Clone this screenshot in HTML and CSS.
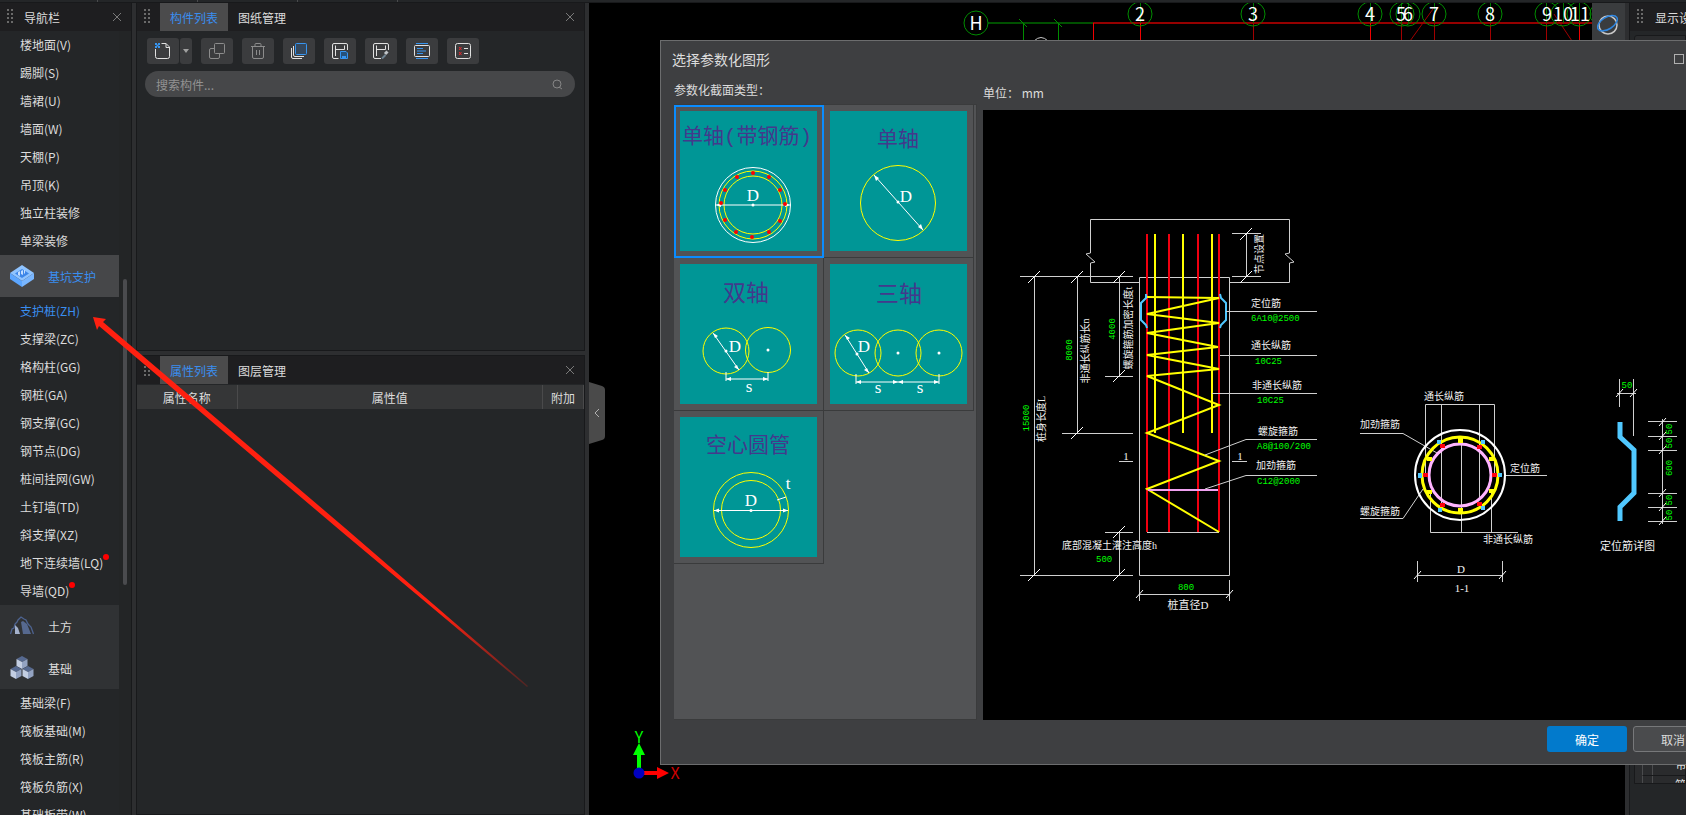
FILE: index.html
```
<!DOCTYPE html>
<html lang="zh-CN">
<head>
    <meta charset="UTF-8">
    <meta name="viewport" content="width=device-width, initial-scale=1.0">
    <title>选择参数化图形</title>
    <link rel="stylesheet" href="styles.css">
</head>
<body>
    <div class="ribbon-edge"></div>
    <div class="workspace">
        <nav class="nav-panel">
            <div class="panel-header">
                <span class="grip"></span>
                <h2>导航栏</h2>
                <button class="close" aria-label="关闭"><svg width="10" height="10" viewBox="0 0 10 10"><path d="M1 1L9 9M9 1L1 9"/></svg></button>
            </div>
            <div class="nav-body">
                <div class="nav-list">
                    <a href="#">楼地面(V)</a>
                    <a href="#">踢脚(S)</a>
                    <a href="#">墙裙(U)</a>
                    <a href="#">墙面(W)</a>
                    <a href="#">天棚(P)</a>
                    <a href="#">吊顶(K)</a>
                    <a href="#">独立柱装修</a>
                    <a href="#">单梁装修</a>
                    <button class="group active">
                        <svg width="24" height="22" viewBox="0 0 24 22">
                            <path fill="#8fc4ff" d="M12 0L24 8L12 16L0 8Z"/>
                            <path fill="#3d86e8" d="M12 4L19 8.500L12 13L5 8.500Z"/>
                            <path fill="#5ca6ff" d="M0 8L12 16V22L0 14Z"/>
                            <path fill="#79b6ff" d="M24 8L12 16V22L24 14Z"/>
                            <path fill="#c3deff" d="M8 7L10 6V11L8 10ZM11 6L13 5V10L11 9ZM14 5L15 5V8L14 9Z"/>
                        </svg>
                        基坑支护
                    </button>
                    <a href="#" class="current">支护桩(ZH)</a>
                    <a href="#">支撑梁(ZC)</a>
                    <a href="#">格构柱(GG)</a>
                    <a href="#">钢桩(GA)</a>
                    <a href="#">钢支撑(GC)</a>
                    <a href="#">钢节点(DG)</a>
                    <a href="#">桩间挂网(GW)</a>
                    <a href="#">土钉墙(TD)</a>
                    <a href="#">斜支撑(XZ)</a>
                    <a href="#"><span class="new">地下连续墙(LQ)</span></a>
                    <a href="#"><span class="new">导墙(QD)</span></a>
                    <button class="group">
                        <svg width="24" height="20" viewBox="0 0 24 20">
                            <path fill="none" stroke="#4d6390" stroke-width="1.3" d="M0.500 18L2 13L4 12L5 8L7 6L8 4L11 1L14 3L16 4L18 8L21 11L23.500 18"/>
                            <path fill="#56698f" d="M11 6L13 5L17 8L21 18H13Z"/>
                            <path fill="#a3b1cc" d="M5 18V9L8 12L10 18Z"/>
                        </svg>
                        土方
                    </button>
                    <button class="group">
                        <svg width="24" height="24" viewBox="0 0 24 24">
                            <g id="cube">
                                <path fill="#56698f" d="M12 0L17.500 3L12 6L6.500 3Z"/>
                                <path fill="#c3cee2" d="M6.500 3L12 6V13L6.500 10Z"/>
                                <path fill="#93a3c2" d="M17.500 3L12 6V13L17.500 10Z"/>
                            </g>
                            <use href="#cube" x="-6" y="10"/>
                            <use href="#cube" x="6" y="10"/>
                        </svg>
                        基础
                    </button>
                    <a href="#">基础梁(F)</a>
                    <a href="#">筏板基础(M)</a>
                    <a href="#">筏板主筋(R)</a>
                    <a href="#">筏板负筋(X)</a>
                    <a href="#">基础板带(W)</a>
                </div>
                <div class="scrollbar"><div class="thumb"></div></div>
            </div>
        </nav>

        <div class="panels">
            <section class="panel components">
                <div class="panel-header">
                    <span class="grip"></span>
                    <button class="tab active">构件列表</button>
                    <button class="tab">图纸管理</button>
                    <button class="close" aria-label="关闭"><svg width="10" height="10" viewBox="0 0 10 10"><path d="M1 1L9 9M9 1L1 9"/></svg></button>
                </div>
                <div class="toolbar">
                    <div class="split">
                        <button aria-label="新建"><svg width="16" height="16" viewBox="0 0 16 16"><path class="w" d="M6.500 0.500H11L14.500 4V13.500Q14.500 15.500 12.500 15.500H2.500Q0.500 15.500 0.500 13.500V6M11 0.500V4.500H15"/><path fill="#3795f0" stroke="none" d="M0 0H2V2H0ZM3 0H5V2H3ZM1.500 1.500H3.500V3.500H1.500ZM0 3H2V5H0ZM3 3H5V5H3Z"/></svg></button>
                        <button class="more" aria-label="更多"><svg width="6" height="4" viewBox="0 0 6 4"><path fill="#a0a0a0" stroke="none" d="M0 0H6L3 4Z"/></svg></button>
                    </div>
                    <button aria-label="复制"><svg width="16" height="16" viewBox="0 0 16 16"><rect class="g" x="5.500" y="0.500" width="10" height="10" rx="1"/><path class="g" d="M5 5.500H2Q0.500 5.500 0.500 7V14Q0.500 15.500 2 15.500H9Q10.500 15.500 10.500 14V11"/></svg></button>
                    <button aria-label="删除"><svg width="16" height="16" viewBox="0 0 16 16"><path class="g" d="M1 3.500H15M5 3V1.500Q5 0.500 6 0.500H10Q11 0.500 11 1.500V3M2.500 4V14Q2.500 15.500 4 15.500H12Q13.500 15.500 13.500 14V4M6.500 7V12M9.500 7V12"/></svg></button>
                    <button aria-label="层间复制"><svg width="16" height="16" viewBox="0 0 16 16"><rect x="4.500" y="0.500" width="11" height="11" rx="1" fill="#34475c" stroke="#3795f0"/><path class="w" d="M2.500 3V12Q2.500 13.500 4 13.500H13M0.500 5V14Q0.500 15.500 2 15.500H11"/></svg></button>
                    <button aria-label="存档"><svg width="16" height="16" viewBox="0 0 16 16"><path class="w" d="M6.500 15.500H2Q0.500 15.500 0.500 14V2Q0.500 0.500 2 0.500H14Q15.500 0.500 15.500 2V7M3.500 2.500V13M3.500 6.500H12.500M12.500 2.500V6.500"/><path fill="#26527c" stroke="#3795f0" d="M8.500 8.500H14L15.500 10V15.500H8.500Z"/><path fill="#3795f0" stroke="none" d="M10 13H14V15H10Z"/></svg></button>
                    <button aria-label="提取"><svg width="16" height="16" viewBox="0 0 16 16"><path class="w" d="M8 15.500H2Q0.500 15.500 0.500 14V2Q0.500 0.500 2 0.500H14Q15.500 0.500 15.500 2V7M3.500 2.500V13M3.500 6.500H12.500M12.500 2.500V6.500"/><path stroke="#c0c4c8" stroke-width="3" d="M12 11L14.500 8.500"/><path stroke="#6e8291" stroke-width="2" d="M9 15.500L12.500 12"/></svg></button>
                    <button aria-label="对齐"><svg width="16" height="16" viewBox="0 0 16 16"><rect class="w" x="0.500" y="2.500" width="15" height="11" rx="1"/><path class="b" d="M2 0.500H14M2 15.500H14M3 5.500H9M3 8H12M3 10.500H9"/></svg></button>
                    <button aria-label="清单"><svg width="16" height="16" viewBox="0 0 16 16"><rect class="w" x="0.500" y="0.500" width="15" height="15" rx="2"/><path class="w" d="M9 5.500H13M9 10.500H13"/><path stroke="#e0282d" d="M4 4L6.500 7M6.500 4L4 7M4 9L6.500 12M6.500 9L4 12"/></svg></button>
                </div>
                <div class="search">
                    <input type="text" placeholder="搜索构件..." aria-label="搜索构件">
                    <svg width="11" height="11" viewBox="0 0 11 11"><circle cx="5" cy="5" r="4"/><path d="M7 8L10 10"/></svg>
                </div>
            </section>
            <section class="panel properties">
                <div class="panel-header">
                    <span class="grip"></span>
                    <button class="tab active">属性列表</button>
                    <button class="tab">图层管理</button>
                    <button class="close" aria-label="关闭"><svg width="10" height="10" viewBox="0 0 10 10"><path d="M1 1L9 9M9 1L1 9"/></svg></button>
                </div>
                <table class="props">
                    <thead>
                        <tr><th class="name">属性名称</th><th>属性值</th><th class="extra">附加</th></tr>
                    </thead>
                </table>
            </section>
        </div>

        <main class="viewport">
            <svg class="model" width="1003" height="812" viewBox="589 3 1003 812">
                <g fill="none" stroke-width="1">
                    <path stroke="#005000" stroke-width="2" d="M988 23H1093"/>
                    <path stroke="#008c00" d="M1023.500 23V41M1058.500 23V41M1019 19L1027 27M1054 19L1062 27"/>
                    <path stroke="#960000" stroke-width="2" d="M1093 23H1592"/>
                    <path stroke="#f00000" d="M1093.500 23V41M1140.500 23V41M1370.500 23V41M1579.500 23V41"/>
                    <path stroke="#a00000" d="M1253.500 23V41M1401.500 23V41M1434.500 23V41M1490.500 23V41M1546.500 23V41M1433 9L1410 41M1554 14L1572 41"/>
                    <path stroke="#007800" d="M1140.500 3V23M1253.500 3V23M1370.500 3V23M1401.500 3V23M1408.500 3V23M1434.500 3V23M1490.500 3V23M1546.500 3V23M1563.500 3V23M1579.500 3V23"/>
                    <path stroke="#c8c8c8" d="M1034 41Q1041 34 1048 41"/>
                    <g stroke="#008c00">
                        <circle cx="976" cy="23" r="12"/>
                        <circle cx="1140" cy="14" r="12"/>
                        <circle cx="1253" cy="14" r="12"/>
                        <circle cx="1370" cy="14" r="12"/>
                        <circle cx="1402" cy="14" r="12"/>
                        <circle cx="1408" cy="14" r="12"/>
                        <circle cx="1434" cy="14" r="12"/>
                        <circle cx="1490" cy="14" r="12"/>
                        <circle cx="1547" cy="14" r="12"/>
                        <circle cx="1563" cy="14" r="12"/>
                        <circle cx="1579" cy="14" r="12"/>
                        <circle cx="1602" cy="14" r="12"/>
                    </g>
                </g>
                <g class="axis-no">
                    <text x="976" y="30">H</text>
                    <text x="1140" y="21">2</text>
                    <text x="1253" y="21">3</text>
                    <text x="1370" y="21">4</text>
                    <text x="1401" y="21">5</text>
                    <text x="1408" y="21">6</text>
                    <text x="1434" y="21">7</text>
                    <text x="1490" y="21">8</text>
                    <text x="1547" y="21">9</text>
                    <text x="1563" y="21">10</text>
                    <text x="1580" y="21">11</text>
                </g>
                <path fill="#00ff00" d="M637 768V755H633L639 743L645 755H641V768Z"/>
                <path fill="#ff0000" d="M644 771H657V767L669 773L657 779V775H644Z"/>
                <circle cx="639" cy="773" r="5.500" fill="#0000c0"/>
                <text class="ucs" x="639" y="743" fill="#00ff00">Y</text>
                <text class="ucs" x="675" y="779" fill="#d00000">X</text>
            </svg>
            <button class="collapse" aria-label="收起"><svg width="16" height="62" viewBox="0 0 16 62"><path fill="#4a4a4a" d="M0 0L13 4Q16 5 16 8V54Q16 57 13 58L0 62Z"/><path fill="none" stroke="#b0b0b0" d="M10 27L6 31L10 35"/></svg></button>
        </main>

        <aside class="view-tools">
            <button aria-label="动态观察"><svg width="22" height="22" viewBox="0 0 22 22"><circle cx="11" cy="11" r="9" fill="none" stroke="#c8c8c8" stroke-width="1.500"/><ellipse cx="11" cy="9" rx="11" ry="6" fill="none" stroke="#2f86e0" stroke-width="1.500" transform="rotate(-32 11 10)"/></svg></button>
        </aside>
        <aside class="display-panel">
            <div class="panel-header">
                <span class="grip"></span>
                <h2>显示设置</h2>
            </div>
            <div class="layers">
                <div class="layer">带</div>
                <div class="layer last">筏</div>
            </div>
        </aside>
    </div>

    <div class="dialog" role="dialog" aria-labelledby="dialog-title">
        <div class="dialog-title">
            <h1 id="dialog-title">选择参数化图形</h1>
            <button class="maximize" aria-label="最大化"></button>
        </div>
        <div class="dialog-body">
            <div class="types">
                <p>参数化截面类型<span class="colon">：</span></p>
                <div class="type-list">
                    <button class="type selected">
                        <svg width="137" height="140" viewBox="0 0 137 140">
                            <text class="cap" x="67" y="32">单轴(带钢筋)</text>
                            <circle class="wl" cx="73" cy="94" r="37.500"/>
                            <circle class="yl" cx="73" cy="94" r="34"/>
                            <circle class="yl" cx="73" cy="94" r="29"/>
                            <path class="wl" d="M36 94H110"/>
                            <path class="wf" d="M36 94L41 92V96ZM110 94L105 92V96Z"/>
                            <circle class="wf" cx="73" cy="94" r="1.500"/>
                            <g fill="#ff0000">
                                <circle cx="73" cy="62" r="2"/><circle cx="89" cy="66" r="2"/><circle cx="100" cy="79" r="2"/>
                                <circle cx="105" cy="93" r="2"/><circle cx="100" cy="110" r="2"/><circle cx="89" cy="121" r="2"/>
                                <circle cx="72" cy="126" r="2"/><circle cx="56" cy="121" r="2"/><circle cx="45" cy="109" r="2"/>
                                <circle cx="41" cy="92" r="2"/><circle cx="45" cy="79" r="2"/><circle cx="57" cy="66" r="2"/>
                            </g>
                            <text class="dim" x="73" y="90">D</text>
                        </svg>
                    </button>
                    <button class="type">
                        <svg width="137" height="140" viewBox="0 0 137 140">
                            <text class="cap" x="68" y="35">单轴</text>
                            <circle class="yl" cx="68" cy="92" r="37.500"/>
                            <path class="wl" d="M44 64L93 119"/>
                            <path class="wf" d="M44 64L49 67L46 70ZM93 119L88 116L91 113Z"/>
                            <circle class="wf" cx="68" cy="91" r="1.500"/>
                            <text class="dim" x="76" y="91">D</text>
                        </svg>
                    </button>
                    <button class="type">
                        <svg width="137" height="140" viewBox="0 0 137 140">
                            <text class="cap big" x="66" y="37">双轴</text>
                            <circle class="yl" cx="46" cy="87" r="23"/>
                            <circle class="yl" cx="88" cy="86" r="22.500"/>
                            <path class="wl" d="M33 69L59 106M46 108V117M88 108V117M46 115H88"/>
                            <path class="wf" d="M33 69L38 72L35 74ZM59 106L54 103L57 101ZM46 115L51 113V117ZM88 115L83 113V117Z"/>
                            <circle class="wf" cx="46" cy="87" r="1.500"/>
                            <circle class="wf" cx="88" cy="86" r="1.500"/>
                            <text class="dim" x="55" y="88">D</text>
                            <text class="dim" x="69" y="128">s</text>
                        </svg>
                    </button>
                    <button class="type">
                        <svg width="137" height="140" viewBox="0 0 137 140">
                            <text class="cap big" x="69" y="38">三轴</text>
                            <circle class="yl" cx="28" cy="89" r="23"/>
                            <circle class="yl" cx="68" cy="89" r="23"/>
                            <circle class="yl" cx="109" cy="89" r="23"/>
                            <path class="wl" d="M15 71L39 109M26 110V120M109 110V120M26 118H109"/>
                            <path class="wf" d="M15 71L20 74L17 76ZM39 109L34 106L37 104ZM26 118L31 116V120ZM68 118L63 116V120ZM68 118L73 116V120ZM109 118L104 116V120Z"/>
                            <circle class="wf" cx="27" cy="90" r="1.500"/>
                            <circle class="wf" cx="68" cy="89" r="1.500"/>
                            <circle class="wf" cx="109" cy="89" r="1.500"/>
                            <text class="dim" x="34" y="88">D</text>
                            <text class="dim" x="48" y="129">s</text>
                            <text class="dim" x="90" y="129">s</text>
                        </svg>
                    </button>
                    <button class="type">
                        <svg width="137" height="140" viewBox="0 0 137 140">
                            <text class="cap" x="68" y="35">空心圆管</text>
                            <circle class="yl" cx="71" cy="93" r="37.500"/>
                            <circle class="yl" cx="71" cy="93" r="29.500"/>
                            <path class="wl" d="M34 93.500H108M97 83L106 80"/>
                            <path class="wf" d="M34 93.500L39 91.500V95.500ZM108 93.500L103 91.500V95.500Z"/>
                            <circle class="wf" cx="71" cy="93.500" r="1.500"/>
                            <text class="dim" x="71" y="89">D</text>
                            <text class="dim" x="108" y="72">t</text>
                        </svg>
                    </button>
                </div>
            </div>
            <div class="preview">
                <p>单位<span class="colon">：</span> mm</p>
                <div class="drawing">
                    <svg width="703" height="610" viewBox="983 110 703 610">
                        <!-- pile cap and pile outline -->
                        <g class="line">
                            <path d="M1090.500 282.500V263L1095 262L1086 254L1090.500 253V219.500H1289.500V253L1285 254L1294 262L1289.500 263V282.500H1229.500M1090.500 282.500H1139"/>
                            <path d="M1139.500 277.500H1229.500V575.500H1139.500Z"/>
                        </g>
                        <!-- dimensions -->
                        <g class="line">
                            <path d="M1020 276.500H1133M1105 376.500H1133M1062 433.500H1133M1105 532.500H1133M1020 575.500H1133M1034.500 277V575M1077.500 277V433M1119.500 277V376M1119.500 532V575"/>
                            <path d="M1232 233.500H1261M1232 276.500H1261M1246.500 234V277M1139.500 580V601M1229.500 580V601M1139 594.500H1229"/>
                            <path d="M1119 461.500H1133M1232 461.500H1247M1147 532.500H1219"/>
                        </g>
                        <path class="tick" d="M1028 283L1040 271M1071 283L1083 271M1113 283L1125 271M1113 382L1125 370M1071 439L1083 427M1113 538L1125 526M1113 581L1125 569M1028 581L1040 569M1240 240L1252 228M1240 283L1252 271M1136 598L1143 590M1226 598L1233 590"/>
                        <!-- reinforcement -->
                        <path class="red" d="M1147 234V532M1169 234V532M1198 234V532M1219 234V532"/>
                        <path class="yellow" d="M1155 234V433M1183 234V433M1212 234V433"/>
                        <path class="yellow" d="M1147 297L1219 298L1147 314L1219 323L1147 333L1218 347L1147 355L1219 369L1147 376L1219 405L1147 433L1219 461L1147 489L1219 532"/>
                        <path class="pink" d="M1148 490H1218"/>
                        <path class="blue" d="M1146 294V298L1141 303V320L1146 325L1147 328M1220 294L1221 298L1226 303V320L1221 325L1220 328"/>
                        <g class="line">
                            <path d="M1226 311.500H1317M1220 355.500H1317M1212 393.500H1317M1317 439.500H1246L1205 455M1317 475.500H1246L1205 489"/>
                        </g>
                        <g class="note">
                            <text x="1251" y="307">定位筋</text>
                            <text x="1251" y="349">通长纵筋</text>
                            <text x="1252" y="389">非通长纵筋</text>
                            <text x="1258" y="435">螺旋箍筋</text>
                            <text x="1256" y="469">加劲箍筋</text>
                            <text x="1062" y="549">底部混凝土灌注高度h</text>
                            <text class="mid large" x="1188" y="609">桩直径D</text>
                            <text class="mid large" x="1126" y="460">1</text>
                            <text class="mid large" x="1240" y="460">1</text>
                            <text class="mid" transform="translate(1263 254) rotate(-90)">节点设置</text>
                            <text class="mid" transform="translate(1132 328) rotate(-90)">螺旋箍筋加密长度t</text>
                            <text class="mid" transform="translate(1089 351) rotate(-90)">非通长纵筋长n</text>
                            <text class="mid" transform="translate(1045 419) rotate(-90)">桩身长度L</text>
                        </g>
                        <g class="value">
                            <text x="1251" y="321">6A10@2500</text>
                            <text x="1255" y="364">10C25</text>
                            <text x="1257" y="403">10C25</text>
                            <text x="1257" y="449">A8@100/200</text>
                            <text x="1257" y="484">C12@2000</text>
                            <text x="1096" y="562">500</text>
                            <text class="mid" x="1186" y="590">800</text>
                            <text class="mid" transform="translate(1115 329) rotate(-90)">4000</text>
                            <text class="mid" transform="translate(1072 350) rotate(-90)">8000</text>
                            <text class="mid" transform="translate(1029 418) rotate(-90)">15000</text>
                        </g>
                        <!-- section 1-1 -->
                        <g class="line">
                            <path d="M1425.500 475V404.500H1494.500V475M1441.500 404V505M1479.500 404V500M1430.500 492V532.500H1518M1461.500 445V532M1491.500 492V532M1360 433.500H1403L1437 453M1360 518.500H1403L1423 489M1504 475.500H1547M1417.500 561V582M1502.500 561V582M1417 575.500H1502"/>
                        </g>
                        <path class="tick" d="M1414 579L1421 571M1499 579L1506 571"/>
                        <circle cx="1460" cy="475" r="45" fill="none" stroke="#fff" stroke-width="2"/>
                        <circle cx="1460" cy="475" r="38" fill="none" stroke="#ffff00" stroke-width="3"/>
                        <circle cx="1460" cy="475" r="31" fill="none" stroke="#ffb4ff" stroke-width="3"/>
                        <path fill="#ff0010" d="M1440 444h5v4h-5zM1477 445h5v4h-5zM1423 473h5v4h-5zM1492 473h5v4h-5zM1440 503h5v4h-5zM1477 502h5v4h-5z"/>
                        <path fill="#50c8ff" d="M1437 440h4v4h-4zM1481 440h4v4h-4zM1418 473h4v5h-4zM1498 473h4v4h-4zM1438 508h4v4h-4zM1481 506h4v4h-4z"/>
                        <path fill="#ffff00" d="M1458 438h5v5h-5zM1427 457h5v4h-5zM1489 457h5v4h-5zM1427 490h5v4h-5zM1489 489h5v4h-5zM1458 508h5v5h-5z"/>
                        <g class="note">
                            <text x="1424" y="400">通长纵筋</text>
                            <text x="1360" y="428">加劲箍筋</text>
                            <text x="1360" y="515">螺旋箍筋</text>
                            <text x="1510" y="472">定位筋</text>
                            <text x="1483" y="543">非通长纵筋</text>
                            <text class="mid large" x="1461" y="573">D</text>
                            <text class="mid large" x="1462" y="592">1-1</text>
                            <text class="large" x="1600" y="550">定位筋详图</text>
                        </g>
                        <!-- spacer detail -->
                        <path fill="none" stroke="#50c8ff" stroke-width="5" d="M1620 422V437L1634 450V493L1620 507V521"/>
                        <g class="line">
                            <path d="M1619.500 379V407M1633.500 379V436M1617 393.500H1636M1662.500 419V524M1648 421.500H1677M1648 436.500H1677M1648 450.500H1677M1648 493.500H1677M1648 507.500H1677M1648 521.500H1677"/>
                        </g>
                        <path class="tick" d="M1616 397L1623 389M1630 397L1637 389M1659 426L1666 418M1659 440L1666 432M1659 454L1666 446M1659 497L1666 489M1659 511L1666 503M1659 525L1666 517"/>
                        <g class="value">
                            <text class="mid" x="1627" y="388">50</text>
                            <text class="mid" transform="translate(1672 429) rotate(-90)">50</text>
                            <text class="mid" transform="translate(1672 443) rotate(-90)">50</text>
                            <text class="mid" transform="translate(1672 468) rotate(-90)">600</text>
                            <text class="mid" transform="translate(1672 500) rotate(-90)">50</text>
                            <text class="mid" transform="translate(1672 515) rotate(-90)">50</text>
                        </g>
                    </svg>
                </div>
            </div>
        </div>
        <div class="dialog-actions">
            <button class="ok">确定</button>
            <button class="cancel">取消</button>
        </div>
    </div>

    <svg class="pointer" width="440" height="380" viewBox="90 310 440 380">
        <defs>
            <linearGradient id="fade" gradientUnits="userSpaceOnUse" x1="93" y1="317" x2="527" y2="686">
                <stop offset="0.8" stop-color="#ff2010"/>
                <stop offset="1" stop-color="#ff2010" stop-opacity="0.2"/>
            </linearGradient>
        </defs>
        <path fill="url(#fade)" d="M93 317L106 319L103 322L345 528L528 686L527 687L342 532L99 326L97 330Z"/>
    </svg>
</body>
</html>
```
FILE: styles.css
```
* {
    box-sizing: border-box;
}
body {
    margin: 0;
    height: 100vh;
    overflow: hidden;
    display: flex;
    flex-direction: column;
    position: relative;
    background: #2d2e30;
    color: #dcdcdc;
    font-family: "Noto Sans CJK SC", sans-serif;
    font-size: 12px;
}
button, input {
    font: inherit;
    color: inherit;
    border: none;
    padding: 0;
    background: none;
}
h1, h2, p {
    margin: 0;
    font-weight: normal;
    font-size: 12px;
}
svg {
    display: block;
    flex: none;
}
.ribbon-edge {
    height: 3px;
    flex: none;
    background: repeating-linear-gradient(90deg, #242628 0 97px, #4a4b4d 97px 98px, #242628 98px 100px) 0 0 / 400px 100% no-repeat #242628;
    border-bottom: 1px solid #18191b;
}
.workspace {
    flex: 1;
    min-height: 0;
    display: flex;
}

/* docked panels */
.panel-header {
    height: 28px;
    flex: none;
    display: flex;
    align-items: center;
    background: #1e1e20;
    padding-left: 5px;
}
.grip {
    width: 8px;
    height: 16px;
    flex: none;
    background: repeating-conic-gradient(#6a6a6a 0 25%, transparent 0 100%) 0 0 / 4px 4px;
}
.close {
    margin-left: auto;
    margin-right: 9px;
}
.close svg {
    fill: none;
    stroke: #7a7a7a;
}
.nav-panel {
    width: 132px;
    flex: none;
    display: flex;
    flex-direction: column;
    background: #232526;
    border-right: 1px solid #18191b;
}
.nav-panel h2 {
    margin-left: 11px;
}
.nav-body {
    flex: 1;
    min-height: 0;
    display: flex;
    overflow: hidden;
}
.nav-list {
    width: 119px;
    background: #242628;
}
.nav-list a {
    display: block;
    height: 28px;
    line-height: 28px;
    padding-left: 20px;
    color: inherit;
    text-decoration: none;
    white-space: nowrap;
}
.nav-list .current, .nav-list .active {
    color: #3a8ef0;
}
.nav-list .group {
    width: 100%;
    height: 42px;
    display: flex;
    align-items: center;
    gap: 14px;
    padding-left: 10px;
    background: #303234;
}
.nav-list .active {
    background: #464749;
}
.new {
    position: relative;
}
.new::after {
    content: "";
    position: absolute;
    top: 0;
    left: 100%;
    width: 6px;
    height: 6px;
    border-radius: 50%;
    background: #ff0000;
}
.scrollbar {
    margin-left: 4px;
}
.thumb {
    width: 4px;
    height: 306px;
    margin-top: 248px;
    border-radius: 2px;
    background: #4a4b4e;
}
.panels {
    width: 449px;
    margin: 0 4px;
    flex: none;
    display: flex;
    flex-direction: column;
    gap: 4px;
}
.panel {
    background: #242628;
    border: 1px solid #18191b;
    border-top: none;
}
.components {
    height: 348px;
    flex: none;
}
.properties {
    flex: 1;
    border-top: 1px solid #18191b;
}
.tab {
    height: 28px;
    padding: 0 10px;
}
.grip + .tab {
    margin-left: 10px;
}
.tab.active {
    background: #4b4b4c;
    color: #3a8ef0;
}
.toolbar {
    display: flex;
    gap: 9px;
    padding: 7px 10px;
}
.toolbar button {
    width: 32px;
    height: 26px;
    display: flex;
    align-items: center;
    justify-content: center;
    background: #3b3c3e;
    border-radius: 3px;
}
.toolbar svg {
    fill: none;
}
.split {
    display: flex;
    gap: 1px;
}
.toolbar .more {
    width: 12px;
}
.w {
    stroke: #e0e0e0;
}
.g {
    stroke: #8c8c8c;
}
.b {
    stroke: #3795f0;
}
.search {
    height: 26px;
    margin: 0 9px 0 8px;
    padding: 0 12px 0 11px;
    display: flex;
    align-items: center;
    background: #464749;
    border-radius: 13px;
}
.search input {
    flex: 1;
    outline: none;
}
.search input::placeholder {
    color: #929292;
}
.search svg {
    fill: none;
    stroke: #858585;
}
.props {
    width: 100%;
    margin-top: 1px;
    border-collapse: collapse;
    table-layout: fixed;
}
.props th {
    height: 24px;
    padding: 0;
    font-weight: normal;
    background: #353637;
    border-right: 1px solid #4a4a4b;
}
.props .name {
    width: 100px;
}
.props .extra {
    width: 41px;
}

/* model view */
.viewport {
    flex: 1;
    min-width: 0;
    position: relative;
    overflow: hidden;
    background: #000;
}
.axis-no {
    fill: #fff;
    font-size: 18px;
    text-anchor: middle;
}
.ucs {
    font-size: 16px;
    text-anchor: middle;
}
.collapse {
    position: absolute;
    left: 0;
    top: 379px;
}
.view-tools {
    width: 33px;
    flex: none;
    padding: 11px 5px;
    background: linear-gradient(#3a3c3e 40px, #000 40px);
}
.display-panel {
    width: 57px;
    flex: none;
    margin-left: 4px;
    display: flex;
    flex-direction: column;
    background: #242628;
    border-left: 1px solid #18191b;
    overflow: hidden;
}
.display-panel h2 {
    margin-left: 12px;
    white-space: nowrap;
}
.layers {
    height: 749px;
    margin: 4px 0 0 4px;
    display: flex;
    flex-direction: column;
    justify-content: flex-end;
    border: 1px solid #18191b;
    border-radius: 3px 0 0 0;
    background: #2a2b2d;
}
.layer {
    height: 24px;
    line-height: 24px;
    margin-left: 7px;
    padding-left: 32px;
    background: linear-gradient(#4a4b4d, #4a4b4d) 9px 0 / 1px 100% no-repeat;
    border-left: 1px solid #4a4b4d;
    border-bottom: 1px solid #18191b;
}
.layer.last {
    height: 7px;
    line-height: 18px;
    overflow: hidden;
    border-bottom: none;
}

/* dialog */
.dialog {
    position: absolute;
    left: 660px;
    right: -42px;
    top: 40px;
    bottom: 50px;
    display: flex;
    flex-direction: column;
    background: #3e3f41;
    border: 1px solid #6c6d6e;
}
.dialog-title {
    height: 38px;
    padding: 0 43px 2px 11px;
    display: flex;
    align-items: center;
    justify-content: space-between;
}
.dialog-title h1 {
    font-size: 14px;
}
.maximize {
    width: 10px;
    height: 10px;
    border: 1px solid #b0b0b0;
}
.dialog-body {
    flex: 1;
    min-height: 0;
    display: flex;
    gap: 6px;
    padding: 0 13px;
}
.types, .preview {
    display: flex;
    flex-direction: column;
}
.colon {
    font-family: "Noto Sans CJK TC", sans-serif;
}
.types p {
    height: 25px;
    line-height: 22px;
}
.type-list {
    flex: 1;
    width: 303px;
    display: grid;
    grid-template-columns: 150px 150px;
    grid-auto-rows: 153px;
    align-content: start;
    background: #525355;
    border: 1px solid #3a3b3c;
    border-left: none;
}
.type {
    display: flex;
    padding: 6px;
    border: solid #3a3b3c;
    border-width: 0 1px 1px 0;
}
.type.selected {
    padding: 4px;
    border: 2px solid #0a8cff;
}
.type svg {
    background: #009696;
}
.cap {
    fill: #43398c;
    font-family: "Liberation Mono", "Noto Sans CJK SC", monospace;
    font-size: 21px;
    text-anchor: middle;
}
.cap.big {
    font-size: 23px;
}
.dim {
    fill: #fff;
    font-family: "Liberation Serif", serif;
    font-size: 17px;
    text-anchor: middle;
}
.wl {
    fill: none;
    stroke: #fff;
}
.wf {
    fill: #fff;
}
.yl {
    fill: none;
    stroke: #ffff00;
}
.preview {
    flex: 1;
    min-width: 0;
}
.preview p {
    height: 31px;
    line-height: 28px;
}
.drawing {
    flex: 1;
    min-height: 0;
    overflow: hidden;
    background: #000;
}
.line {
    fill: none;
    stroke: #d0d0d0;
}
.tick {
    fill: none;
    stroke: #fff;
}
.red, .yellow, .pink, .blue {
    fill: none;
    stroke-width: 2;
}
.red {
    stroke: #f00010;
}
.yellow {
    stroke: #ffff00;
}
.pink {
    stroke: #f0a0f0;
}
.blue {
    stroke: #50c8ff;
}
.note {
    fill: #f0f0f0;
    font-family: "Liberation Serif", "Noto Sans CJK SC", serif;
    font-size: 10px;
}
.value {
    fill: #00ff00;
    font-family: "Liberation Mono", monospace;
    font-size: 9px;
}
.mid {
    text-anchor: middle;
}
.large {
    font-size: 11px;
}
.dialog-actions {
    height: 44px;
    display: flex;
    justify-content: flex-end;
    gap: 6px;
    padding: 6px 14px 0 0;
}
.dialog-actions button {
    width: 80px;
    height: 26px;
    border-radius: 3px;
}
.dialog-actions .ok {
    background: #027acc;
    color: #fff;
}
.dialog-actions .cancel {
    background: #4a4b4d;
    border: 1px solid #77787a;
}

/* red callout arrow over the panels */
.pointer {
    position: absolute;
    left: 90px;
    top: 310px;
    pointer-events: none;
}
```
